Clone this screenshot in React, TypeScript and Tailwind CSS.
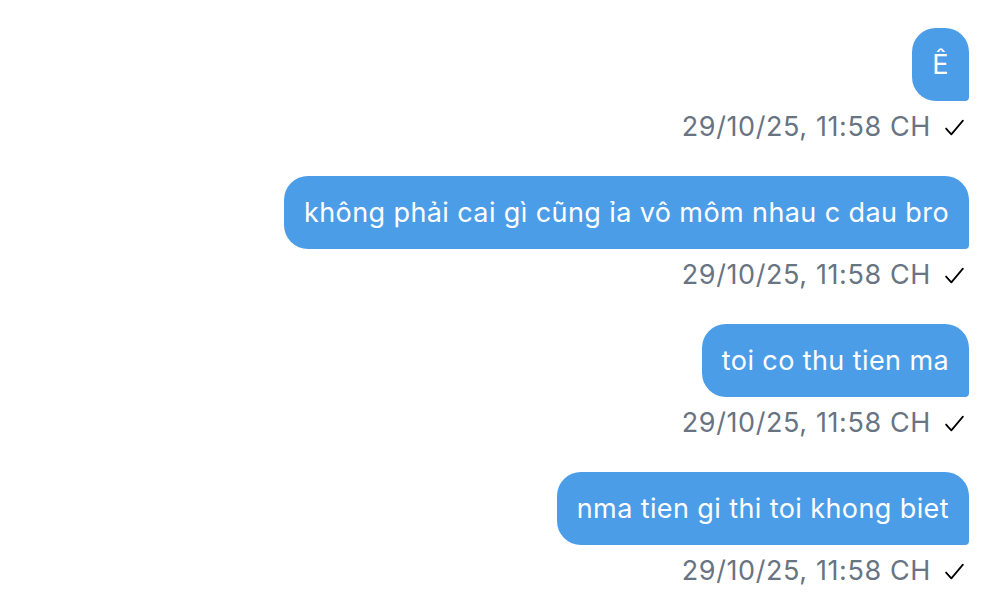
const messages = [
  "Ê",
  "không phải cai gì cũng ỉa vô môm nhau c dau bro",
  "toi co thu tien ma",
  "nma tien gi thi toi khong biet",
];

function Check() {
  return (
    <svg width="21" height="21" viewBox="0 0 20 20" fill="none" className="text-black">
      <path d="M2 11 L7 16.5 L18 3.5" stroke="currentColor" strokeWidth="1.7" strokeLinecap="round" strokeLinejoin="round" />
    </svg>
  );
}

export default function App() {
  return (
    <main
      className="min-h-screen bg-white flex flex-col items-end gap-[33px] pt-7 pr-6"
      style={{ fontFamily: "Inter, 'Noto Sans', sans-serif" }}
    >
      {messages.map((m, i) => (
        <div key={i} className="flex flex-col items-end">
          <div className="bg-[#4b9de8] text-white text-[27px] tracking-[0.4px] leading-[33px] px-5 py-5 rounded-3xl rounded-br-[4px]">
            {m}
          </div>
          <div className="mt-[10px] flex items-center gap-[13px] pr-1 text-[27px] tracking-[0.6px] leading-[32px] text-[#687482]">
            <span>29/10/25, 11:58 CH</span>
            <Check />
          </div>
        </div>
      ))}
    </main>
  );
}
